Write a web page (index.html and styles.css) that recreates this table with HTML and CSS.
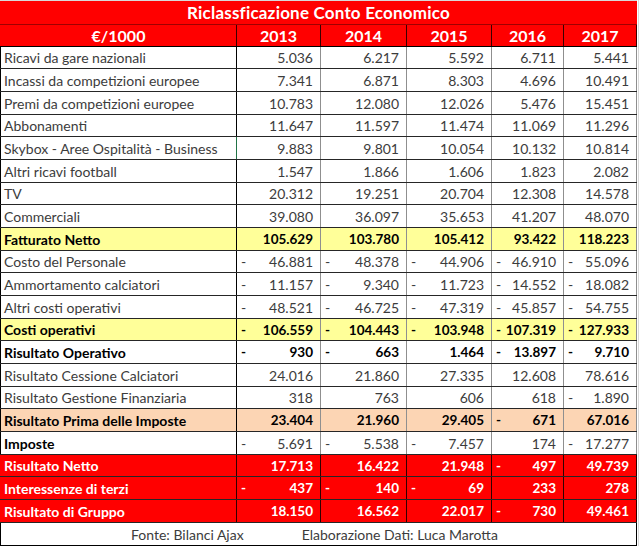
FILE: index.html
```html
<!DOCTYPE html>
<html lang="it">
<head>
<meta charset="utf-8">
<title>Riclassficazione Conto Economico</title>
<link rel="stylesheet" href="styles.css">
</head>
<body>
<div class="sheet">
  <div class="title">Riclassficazione Conto Economico</div>
  <div class="row head">
    <div class="c lab">€/1000</div><div class="c">2013</div><div class="c">2014</div><div class="c">2015</div><div class="c">2016</div><div class="c">2017</div>
  </div>
  <div class="rows">
    <div class="row"><div class="c lab">Ricavi da gare nazionali</div><div class="c"><span></span><span>5.036</span></div><div class="c"><span></span><span>6.217</span></div><div class="c"><span></span><span>5.592</span></div><div class="c"><span></span><span>6.711</span></div><div class="c"><span></span><span>5.441</span></div></div>
    <div class="row"><div class="c lab">Incassi da competizioni europee</div><div class="c"><span></span><span>7.341</span></div><div class="c"><span></span><span>6.871</span></div><div class="c"><span></span><span>8.303</span></div><div class="c"><span></span><span>4.696</span></div><div class="c"><span></span><span>10.491</span></div></div>
    <div class="row"><div class="c lab">Premi da competizioni europee</div><div class="c"><span></span><span>10.783</span></div><div class="c"><span></span><span>12.080</span></div><div class="c"><span></span><span>12.026</span></div><div class="c"><span></span><span>5.476</span></div><div class="c"><span></span><span>15.451</span></div></div>
    <div class="row"><div class="c lab">Abbonamenti</div><div class="c"><span></span><span>11.647</span></div><div class="c"><span></span><span>11.597</span></div><div class="c"><span></span><span>11.474</span></div><div class="c"><span></span><span>11.069</span></div><div class="c"><span></span><span>11.296</span></div></div>
    <div class="row"><div class="c lab">Skybox - Aree Ospitalità - Business</div><div class="c sel"><span></span><span>9.883</span></div><div class="c"><span></span><span>9.801</span></div><div class="c"><span></span><span>10.054</span></div><div class="c"><span></span><span>10.132</span></div><div class="c"><span></span><span>10.814</span></div></div>
    <div class="row"><div class="c lab">Altri ricavi football</div><div class="c"><span></span><span>1.547</span></div><div class="c"><span></span><span>1.866</span></div><div class="c"><span></span><span>1.606</span></div><div class="c"><span></span><span>1.823</span></div><div class="c"><span></span><span>2.082</span></div></div>
    <div class="row"><div class="c lab">TV</div><div class="c"><span></span><span>20.312</span></div><div class="c"><span></span><span>19.251</span></div><div class="c"><span></span><span>20.704</span></div><div class="c"><span></span><span>12.308</span></div><div class="c"><span></span><span>14.578</span></div></div>
    <div class="row"><div class="c lab">Commerciali</div><div class="c"><span></span><span>39.080</span></div><div class="c"><span></span><span>36.097</span></div><div class="c"><span></span><span>35.653</span></div><div class="c"><span></span><span>41.207</span></div><div class="c"><span></span><span>48.070</span></div></div>
    <div class="row bold yellow"><div class="c lab">Fatturato Netto</div><div class="c"><span></span><span>105.629</span></div><div class="c"><span></span><span>103.780</span></div><div class="c"><span></span><span>105.412</span></div><div class="c"><span></span><span>93.422</span></div><div class="c"><span></span><span>118.223</span></div></div>
    <div class="row"><div class="c lab">Costo del Personale</div><div class="c"><span>-</span><span>46.881</span></div><div class="c"><span>-</span><span>48.378</span></div><div class="c"><span>-</span><span>44.906</span></div><div class="c"><span>-</span><span>46.910</span></div><div class="c"><span>-</span><span>55.096</span></div></div>
    <div class="row"><div class="c lab">Ammortamento calciatori</div><div class="c"><span>-</span><span>11.157</span></div><div class="c"><span>-</span><span>9.340</span></div><div class="c"><span>-</span><span>11.723</span></div><div class="c"><span>-</span><span>14.552</span></div><div class="c"><span>-</span><span>18.082</span></div></div>
    <div class="row"><div class="c lab">Altri costi operativi</div><div class="c"><span>-</span><span>48.521</span></div><div class="c"><span>-</span><span>46.725</span></div><div class="c"><span>-</span><span>47.319</span></div><div class="c"><span>-</span><span>45.857</span></div><div class="c"><span>-</span><span>54.755</span></div></div>
    <div class="row bold yellow"><div class="c lab">Costi operativi</div><div class="c"><span>-</span><span>106.559</span></div><div class="c"><span>-</span><span>104.443</span></div><div class="c"><span>-</span><span>103.948</span></div><div class="c"><span>-</span><span>107.319</span></div><div class="c"><span>-</span><span>127.933</span></div></div>
    <div class="row bold"><div class="c lab">Risultato Operativo</div><div class="c"><span>-</span><span>930</span></div><div class="c"><span>-</span><span>663</span></div><div class="c"><span></span><span>1.464</span></div><div class="c"><span>-</span><span>13.897</span></div><div class="c"><span>-</span><span>9.710</span></div></div>
    <div class="row"><div class="c lab">Risultato Cessione Calciatori</div><div class="c"><span></span><span>24.016</span></div><div class="c"><span></span><span>21.860</span></div><div class="c"><span></span><span>27.335</span></div><div class="c"><span></span><span>12.608</span></div><div class="c"><span></span><span>78.616</span></div></div>
    <div class="row"><div class="c lab">Risultato Gestione Finanziaria</div><div class="c"><span></span><span>318</span></div><div class="c"><span></span><span>763</span></div><div class="c"><span></span><span>606</span></div><div class="c"><span></span><span>618</span></div><div class="c"><span>-</span><span>1.890</span></div></div>
    <div class="row bold peach"><div class="c lab">Risultato Prima delle Imposte</div><div class="c"><span></span><span>23.404</span></div><div class="c"><span></span><span>21.960</span></div><div class="c"><span></span><span>29.405</span></div><div class="c"><span>-</span><span>671</span></div><div class="c"><span></span><span>67.016</span></div></div>
    <div class="row boldlab"><div class="c lab">Imposte</div><div class="c"><span>-</span><span>5.691</span></div><div class="c"><span>-</span><span>5.538</span></div><div class="c"><span>-</span><span>7.457</span></div><div class="c"><span></span><span>174</span></div><div class="c"><span>-</span><span>17.277</span></div></div>
    <div class="row bold red"><div class="c lab">Risultato Netto</div><div class="c"><span></span><span>17.713</span></div><div class="c"><span></span><span>16.422</span></div><div class="c"><span></span><span>21.948</span></div><div class="c"><span>-</span><span>497</span></div><div class="c"><span></span><span>49.739</span></div></div>
    <div class="row bold red"><div class="c lab">Interessenze di terzi</div><div class="c"><span>-</span><span>437</span></div><div class="c"><span>-</span><span>140</span></div><div class="c"><span>-</span><span>69</span></div><div class="c"><span></span><span>233</span></div><div class="c"><span></span><span>278</span></div></div>
    <div class="row bold red"><div class="c lab">Risultato di Gruppo</div><div class="c"><span></span><span>18.150</span></div><div class="c"><span></span><span>16.562</span></div><div class="c"><span></span><span>22.017</span></div><div class="c"><span>-</span><span>730</span></div><div class="c"><span></span><span>49.461</span></div></div>
  </div>
  <div class="foot"><span class="src">Fonte: Bilanci Ajax</span><span class="auth">Elaborazione Dati: Luca Marotta</span></div>
</div>
</body>
</html>
```
FILE: styles.css
```css
html, body {
  margin: 0;
  padding: 0;
  background: #fff;
}
body {
  font-family: Lato, "Open Sans", sans-serif;
  font-size: 14px;
  color: #3c3c3c;
  width: 640px;
  height: 546px;
  overflow: hidden;
}
.sheet {
  width: 637px;
  border-top: 1px solid #d9d9d9;
  box-shadow: 1px 0 0 #fff, 2px 0 0 #d9d9d9;
}
.title {
  box-sizing: border-box;
  background: #ff0000;
  border-bottom: 1px solid #a00000;
  color: #fff;
  font-weight: 700;
  font-size: 17px;
  letter-spacing: 0.2px;
  display: flex;
  align-items: center;
  justify-content: center;
  height: 24px;
}
.row {
  display: grid;
  grid-template-columns: 237px 84px 86px 85px 72px 73px;
  box-sizing: border-box;
  border-bottom: 1px solid #262626;
}
.rows .row { height: 23px; }
.rows .row:nth-child(3n+1) { height: 22px; }
.c {
  box-sizing: border-box;
  border-right: 1px solid #8f8f8f;
  display: flex;
  align-items: center;
  justify-content: space-between;
  padding: 0 7px 0 4px;
  white-space: nowrap;
  overflow: hidden;
}
.c.lab {
  border-left: 1px solid #000;
  border-right: 1px solid #000;
  padding-left: 3px;
}
.c.sel { border-left: 1px solid #217346; margin-left: -1px; }
.head {
  height: 22px;
  background: #ff0000;
  color: #fff;
  font-weight: 700;
  font-size: 16px;
  border-bottom: 1px solid #000;
}
.head .c {
  justify-content: center;
  padding: 0;
  border-right-color: #3a0000;
}
.head .c.lab { border-left-color: #ff0000; }
.bold { font-weight: 700; color: #000; }
.bold .c:not(.lab) { font-size: 13.5px; }
.boldlab .lab { font-weight: 700; color: #000; }
.yellow { background: #ffff99; }
.peach { background: #fcd5b4; }
.red { background: #ff0000; color: #fff; }
.red .c { border-right-color: #300000; }
.red .c.lab { border-left-color: #ff0000; border-right-color: #300000; }
.foot {
  height: 23px;
  box-sizing: border-box;
  border-left: 1px solid #000;
  border-right: 1px solid #000;
  border-bottom: 1px solid #000;
  display: flex;
  align-items: center;
  padding-left: 130px;
}
.foot .auth { margin-left: 58px; }
```
